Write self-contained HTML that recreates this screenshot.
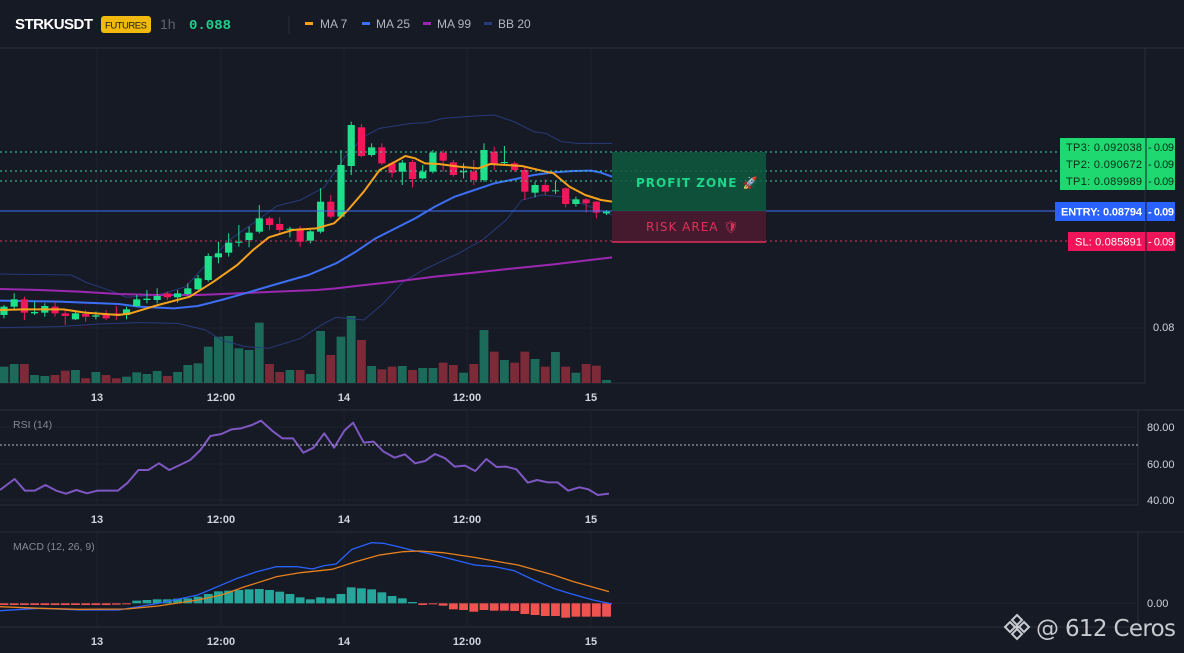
<!DOCTYPE html>
<html><head><meta charset="utf-8">
<style>
html,body{margin:0;padding:0;background:#161a25;width:1184px;height:653px;overflow:hidden;font-family:"Liberation Sans","DejaVu Sans",sans-serif}
svg{position:absolute;left:0;top:0}
</style></head>
<body>
<svg id="s" width="1184" height="653" xmlns="http://www.w3.org/2000/svg" font-family="Liberation Sans, DejaVu Sans, sans-serif">
<rect width="1184" height="653" fill="#161a25"/>
<line x1="0" y1="48" x2="1184" y2="48" stroke="#2a2e39"/>
<text x="15" y="29" fill="#ffffff" font-size="15" font-weight="bold" textLength="78">STRKUSDT</text>
<rect x="101" y="16" width="50" height="17" rx="3" fill="#f0b90b"/>
<text x="126" y="28.5" fill="#1a1a1a" font-size="9.5" text-anchor="middle" textLength="42">FUTURES</text>
<text x="160" y="29" fill="#5d6270" font-size="14">1h</text>
<text x="189" y="29" fill="#1fd18a" font-size="14" font-weight="bold" font-family="Liberation Mono, monospace">0.088</text>
<line x1="289" y1="16" x2="289" y2="34" stroke="#2a2e39"/>
<rect x="305" y="22" width="8" height="3" fill="#f7a21b"/><text x="320" y="28" fill="#b2b5be" font-size="12">MA 7</text>
<rect x="362" y="22" width="8" height="3" fill="#3d6ff5"/><text x="376" y="28" fill="#b2b5be" font-size="12">MA 25</text>
<rect x="423" y="22" width="8" height="3" fill="#9c27b0"/><text x="437" y="28" fill="#b2b5be" font-size="12">MA 99</text>
<rect x="484" y="22" width="8" height="3" fill="#2b3a7a"/><text x="498" y="28" fill="#b2b5be" font-size="12">BB 20</text>
<g stroke="#2a2e39" fill="none">
<line x1="1145" y1="48" x2="1145" y2="383"/>
<line x1="0" y1="383" x2="1145" y2="383"/>
<line x1="0" y1="410" x2="1184" y2="410"/>
<line x1="1138" y1="410" x2="1138" y2="505"/>
<line x1="0" y1="505" x2="1138" y2="505"/>
<line x1="0" y1="532" x2="1184" y2="532"/>
<line x1="1138" y1="532" x2="1138" y2="627"/>
<line x1="0" y1="627" x2="1138" y2="627"/>
</g>
<g stroke="#1f2330">
<line x1="97" y1="48" x2="97" y2="383"/><line x1="221" y1="48" x2="221" y2="383"/><line x1="344" y1="48" x2="344" y2="383"/><line x1="467" y1="48" x2="467" y2="383"/><line x1="591" y1="48" x2="591" y2="383"/>
<line x1="97" y1="410" x2="97" y2="505"/><line x1="221" y1="410" x2="221" y2="505"/><line x1="344" y1="410" x2="344" y2="505"/><line x1="467" y1="410" x2="467" y2="505"/><line x1="591" y1="410" x2="591" y2="505"/>
<line x1="97" y1="532" x2="97" y2="627"/><line x1="221" y1="532" x2="221" y2="627"/><line x1="344" y1="532" x2="344" y2="627"/><line x1="467" y1="532" x2="467" y2="627"/><line x1="591" y1="532" x2="591" y2="627"/>
<line x1="0" y1="328" x2="1145" y2="328"/>
<line x1="0" y1="427" x2="1138" y2="427"/><line x1="0" y1="464" x2="1138" y2="464"/><line x1="0" y1="500" x2="1138" y2="500"/>
<line x1="0" y1="603" x2="1138" y2="603"/>
</g>
<g id="chart"></g>
<g stroke-dasharray="2,3" stroke-width="1">
<line x1="0" y1="152" x2="1060" y2="152" stroke="#3ed6a0"/>
<line x1="0" y1="171" x2="1060" y2="171" stroke="#3ed6a0"/>
<line x1="0" y1="181" x2="1060" y2="181" stroke="#3ed6a0"/>
<line x1="0" y1="241" x2="1068" y2="241" stroke="#e0305a"/>
</g>
<line x1="0" y1="211" x2="1055" y2="211" stroke="#3d6ff5"/>
<rect x="612" y="152" width="154" height="59" fill="#0e5a40" opacity="0.85"/>
<rect x="612" y="211" width="154" height="31" fill="#4a1a30" opacity="0.9"/>
<line x1="612" y1="242" x2="766" y2="242" stroke="#e0305a" stroke-width="1.5"/>
<text x="636" y="187" fill="#1ed68a" font-size="12" font-weight="bold" letter-spacing="1" font-family="DejaVu Sans, sans-serif">PROFIT ZONE 🚀</text>
<text x="646" y="231" fill="#e0305a" font-size="12" letter-spacing="1" font-family="DejaVu Sans, sans-serif">RISK AREA 🛡</text>
<rect x="1060" y="138" width="115" height="52" fill="#1fd870"/>
<line x1="1146" y1="138" x2="1146" y2="190" stroke="#161a25"/>
<g fill="#0b2a18" font-size="11">
<text x="1066" y="151" textLength="76">TP3: 0.092038</text><text x="1066" y="168" textLength="76">TP2: 0.090672</text><text x="1066" y="185" textLength="76">TP1: 0.089989</text>
<text x="1148" y="151" textLength="26">- 0.09</text><text x="1148" y="168" textLength="26">- 0.09</text><text x="1148" y="185" textLength="26">- 0.09</text>
</g>
<rect x="1055" y="202" width="120" height="19" fill="#2962ff"/>
<line x1="1146" y1="202" x2="1146" y2="221" stroke="#161a25"/>
<text x="1061" y="215.5" fill="#fff" font-size="11" font-weight="bold" textLength="81">ENTRY: 0.08794</text>
<text x="1148" y="215.5" fill="#fff" font-size="11" font-weight="bold" textLength="26">- 0.09</text>
<rect x="1068" y="232" width="107" height="19" fill="#f0145a"/>
<line x1="1146" y1="232" x2="1146" y2="251" stroke="#161a25"/>
<text x="1075" y="245.5" fill="#fff" font-size="11" textLength="67">SL: 0.085891</text>
<text x="1148" y="245.5" fill="#fff" font-size="11" textLength="26">- 0.09</text>
<g fill="#d1d4dc" font-size="11">
<text x="1153" y="331">0.08</text>
<text x="1147" y="431">80.00</text><text x="1147" y="468">60.00</text><text x="1147" y="504">40.00</text>
<text x="1147" y="607">0.00</text>
</g>
<g fill="#d1d4dc" font-size="11" font-weight="bold" text-anchor="middle">
<text x="97" y="401">13</text><text x="221" y="401">12:00</text><text x="344" y="401">14</text><text x="467" y="401">12:00</text><text x="591" y="401">15</text>
<text x="97" y="523">13</text><text x="221" y="523">12:00</text><text x="344" y="523">14</text><text x="467" y="523">12:00</text><text x="591" y="523">15</text>
<text x="97" y="645">13</text><text x="221" y="645">12:00</text><text x="344" y="645">14</text><text x="467" y="645">12:00</text><text x="591" y="645">15</text>
</g>
<line x1="0" y1="445" x2="1138" y2="445" stroke="#b2b5be" stroke-dasharray="2,2"/>
<text x="13" y="428" fill="#868993" font-size="10.5">RSI (14)</text>
<text x="13" y="550" fill="#868993" font-size="10.5">MACD (12, 26, 9)</text>
<g transform="translate(1017,627)" fill="#c8cad0">
<path d="M0,-12 L5,-7 L0,-2 L-5,-7Z M0,2 L5,7 L0,12 L-5,7Z M-7,-5 L-2,0 L-7,5 L-12,0Z M7,-5 L12,0 L7,5 L2,0Z" fill="none" stroke="#c8cad0" stroke-width="2"/>
<rect x="-2" y="-2" width="4" height="4" transform="rotate(45)"/>
</g>
<text x="1036" y="636" fill="#c8cad0" font-size="23" font-family="DejaVu Sans, sans-serif" textLength="140">@ 612 Ceros</text>
</svg>
<script>
const NS="http://www.w3.org/2000/svg",g=document.getElementById("chart");
const SX=620/1568;
function el(t,a){const e=document.createElementNS(NS,t);for(const k in a)e.setAttribute(k,a[k]);g.appendChild(e);return e}
const Y=z=>100+z/3, cx=i=>(10+i*25.83)*SX;
const C=[[645,620,615,655],[620,598,580,628],[598,638,590,660],[640,636,605,645],[638,618,610,650],[620,640,605,650],[640,648,630,675],[658,640,635,660],[642,650,630,665],[650,646,635,658],[643,655,630,660],[640,646,618,660],[645,628,620,658],[618,598,585,620],[600,596,570,610],[600,588,565,610],[580,592,575,600],[592,580,570,608],[582,565,550,585],[568,535,525,570],[540,468,460,545],[472,460,425,490],[458,428,400,470],[428,425,375,440],[420,398,380,442],[395,355,315,400],[355,375,350,390],[372,390,352,398],[388,386,380,412],[385,425,378,440],[422,394,390,430],[395,305,265,400],[305,350,285,355],[350,195,150,355],[198,75,65,225],[82,168,72,172],[165,142,130,170],[142,190,130,195],[190,218,185,232],[215,188,180,255],[186,237,180,262],[235,215,195,238],[215,158,150,220],[158,182,150,215],[187,225,180,230],[217,214,190,235],[215,240,180,255],[240,150,130,245],[155,192,140,210],[188,186,138,195],[190,210,185,215],[210,275,200,300],[278,255,245,292],[255,275,238,285],[272,271,245,282],[265,312,262,322],[312,298,290,320],[298,310,295,338],[305,338,303,355],[340,335,330,345]];
const V="800g792g792r825g828g825r812r810g835r816g825r835r830g817g822g813g828r816g795g790g740g710g708g745g750g668g792r816r810g810r822g693g765r710g648g720r798g808r800r798g810r804g804g788r795r818g792r690g755r780g788r755r777g800r756g800r818g792r797r840g".match(/\d+[gr]/g);
V.forEach((v,i)=>{const t=parseInt(v),c=v.slice(-1)=="g"?"#1c6b5a":"#7d2a38";el("rect",{x:cx(i)-4.4,y:Y(t),width:8.8,height:383-Y(t),fill:c})});
function line(pts,col,w,off){el("polyline",{points:pts.map(p=>(p[0]*SX)+","+(off+p[1]/3)).join(" "),fill:"none",stroke:col,"stroke-width":w,"stroke-linejoin":"round"})}
line([[0,522],[180,525],[220,548],[280,572],[320,592],[400,585],[470,560],[520,495],[580,420],[640,370],[700,318],[760,300],[820,262],[870,175],[920,110],[960,85],[1040,70],[1080,68],[1120,55],[1200,48],[1250,45],[1300,65],[1350,95],[1380,100],[1420,125],[1460,130],[1548,130]],"#283a7a",1,100);
line([[0,683],[150,680],[250,672],[350,668],[450,670],[520,690],[560,720],[620,740],[680,745],[760,715],[820,670],[850,652],[880,655],[920,660],[970,610],[1020,545],[1070,510],[1160,460],[1220,420],[1280,360],[1320,300],[1370,285],[1420,290],[1470,310],[1548,345]],"#283a7a",1,100);
line([[0,567],[100,570],[200,575],[300,582],[400,585],[500,585],[600,580],[700,575],[800,570],[850,565],[900,558],[1000,545],[1100,530],[1200,518],[1300,505],[1400,493],[1548,472]],"#9c27b0",2,100);
line([[0,602],[150,605],[300,612],[350,620],[440,625],[500,618],[560,600],[620,580],[700,552],[780,525],[850,490],[900,455],[950,415],[1000,385],[1050,355],[1100,320],[1150,290],[1200,270],[1250,250],[1300,238],[1350,225],[1400,217],[1450,213],[1495,212],[1520,218],[1548,230]],"#3d6ff5",2,100);
C.forEach((c,i)=>{const [o,cl,h,l]=c,col=cl<o?"#1fe08a":"#f0185a",x=cx(i);el("line",{x1:x,x2:x,y1:Y(h),y2:Y(l),stroke:col,"stroke-width":1});const t=Math.min(o,cl),b=Math.max(o,cl);el("rect",{x:x-3.6,y:Y(t),width:7.2,height:Math.max(1,(b-t)/3),fill:col})});
line([[0,630],[60,628],[160,628],[215,638],[300,645],[330,640],[400,615],[480,590],[540,545],[600,495],[640,450],[680,412],[740,390],[800,385],[845,370],[880,330],[920,275],[960,210],[1000,185],[1025,168],[1050,175],[1075,190],[1110,192],[1160,200],[1210,205],[1240,192],[1280,195],[1320,198],[1370,212],[1400,220],[1440,260],[1480,285],[1520,300],[1548,305]],"#f7a21b",2,100);
line([[0,270],[37,237],[63,272],[88,272],[115,255],[142,272],[167,281],[193,270],[220,280],[246,272],[272,272],[298,272],[323,248],[350,210],[375,210],[402,190],[428,210],[455,195],[481,180],[507,150],[532,108],[560,102],[586,88],[610,85],[637,75],[660,62],[688,92],[714,115],[741,115],[767,158],[793,143],[820,100],[845,143],[871,92],[893,68],[920,128],[945,125],[970,155],[998,173],[1024,163],[1050,190],[1075,183],[1100,162],[1126,175],[1150,200],[1176,197],[1202,213],[1230,177],[1256,201],[1280,200],[1306,208],[1335,248],[1358,240],[1385,247],[1410,247],[1437,272],[1465,262],[1488,268],[1512,285],[1540,281]],"#7e57c2",2,400);
const H=[615,615,615,615,615,615,615,615,615,615,615,614,611,602,600,598,598,596,595,590,582,574,572,570,568,567,570,575,582,592,598,592,595,582,562,565,568,577,588,595,606,615,613,617,628,630,635,630,632,632,633,642,645,648,648,653,650,650,650,650];
H.forEach((h,i)=>{const z=610,pos=h<z;const t=Math.min(h,z),b=Math.max(h,z);el("rect",{x:cx(i)-4.4,y:400+t/3,width:8.8,height:Math.max(1,(b-t)/3),fill:pos?"#26a69a":"#ef5350"})});
line([[0,632],[100,625],[200,630],[300,630],[400,610],[500,585],[550,560],[600,535],[650,515],[700,500],[750,500],[790,507],[820,497],[850,492],[890,448],[940,428],[970,430],[1000,438],[1040,450],[1090,462],[1150,480],[1200,495],[1250,500],[1300,512],[1350,540],[1400,565],[1440,580],[1500,600],[1548,612]],"#2962ff",1.3,400);
line([[0,620],[100,625],[200,628],[320,627],[400,618],[500,600],[560,585],[620,560],[700,530],[760,518],[840,508],[900,485],[960,465],[1020,455],[1060,453],[1120,458],[1200,472],[1260,485],[1310,495],[1400,525],[1450,545],[1540,575]],"#e8801c",1.3,400);
</script>
</body></html>
